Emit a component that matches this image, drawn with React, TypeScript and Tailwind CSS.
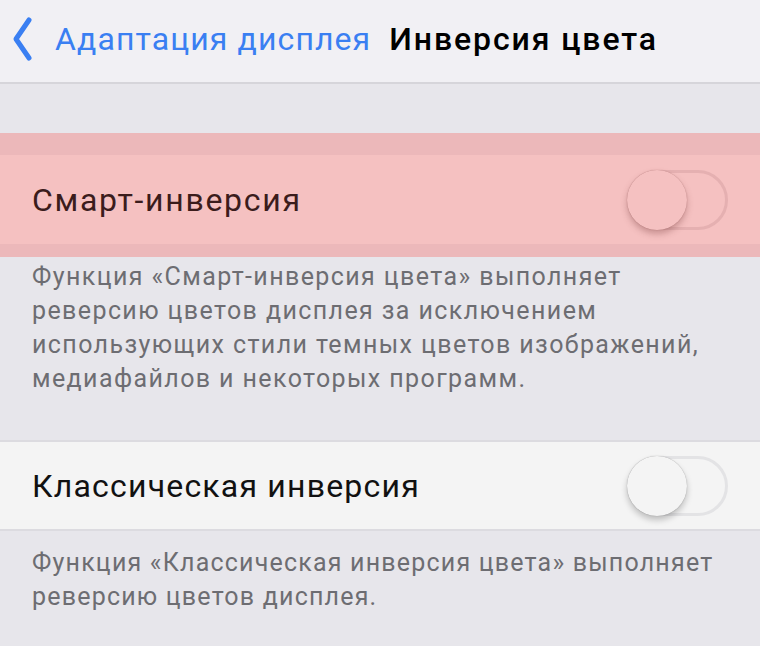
import React from "react";

function Toggle({ pink }: { pink?: boolean }) {
  return (
    <div
      className={`relative h-[60px] w-[101px] rounded-full border-[3px] ${
        pink ? "border-[#e5b0b1] bg-[#f5c1c1]" : "border-[#e3e3e5] bg-[#f4f4f4]"
      }`}
    >
      <div
        className={`absolute left-[-3px] top-[-3px] h-[60px] w-[60px] rounded-full ${
          pink
            ? "bg-[#f5c1c1] shadow-[0_4px_6px_rgba(120,60,60,0.35),0_0_1px_rgba(120,60,60,0.5)]"
            : "bg-[#f4f4f4] shadow-[0_4px_6px_rgba(0,0,0,0.22),0_0_1px_rgba(0,0,0,0.35)]"
        }`}
      />
    </div>
  );
}

export default function App() {
  return (
    <div
      className="h-[646px] w-[760px] overflow-hidden bg-[#e7e6eb]"
      style={{ fontFamily: "Roboto, 'Liberation Sans', sans-serif" }}
    >
      {/* nav bar */}
      <div className="flex h-[84px] items-center border-b-2 border-[#d6d5da] bg-[#f1f0f4] pb-1">
        <svg width="24" height="46" viewBox="0 0 24 46" className="ml-[11px] mr-[20px]">
          <path d="M18 4 L5 23 L18 42" fill="none" stroke="#3a7ff2" strokeWidth="5" strokeLinecap="round" strokeLinejoin="round" />
        </svg>
        <span className="text-[32px] tracking-[1.1px] text-[#3a7ff2]">Адаптация дисплея</span>
        <span className="ml-[18px] text-[32px] font-medium tracking-[1.9px] text-black">Инверсия цвета</span>
      </div>

      <div className="h-[49px]" />

      {/* smart inversion (highlighted) */}
      <div className="bg-[#ecb8ba] pb-[13px] pt-[22px]">
        <div className="flex h-[89px] items-center justify-between bg-[#f5c1c1] pl-[32px] pr-[32px]">
          <span className="text-[32px] tracking-[1.7px] text-[#3b1c1c]">Смарт-инверсия</span>
          <Toggle pink />
        </div>
      </div>

      <p className="px-[32px] pt-[3px] text-[25px] leading-[34px] tracking-[1.4px] text-[#6d6d72]">
        Функция «Смарт-инверсия цвета» выполняет
        <br />
        реверсию цветов дисплея за исключением
        <br />
        использующих стили темных цветов изображений,
        <br />
        медиафайлов и некоторых программ.
      </p>

      <div className="h-[44px]" />

      {/* classic inversion */}
      <div className="flex h-[91px] items-center justify-between border-y-2 border-[#dcdbe0] bg-[#f4f4f4] pl-[32px] pr-[32px]">
        <span className="text-[32px] tracking-[1.2px] text-[#111]">Классическая инверсия</span>
        <Toggle />
      </div>

      <p className="px-[32px] pt-[15px] text-[25px] leading-[34px] tracking-[1.2px] text-[#6d6d72]">
        Функция «Классическая инверсия цвета» выполняет
        <br />
        реверсию цветов дисплея.
      </p>
    </div>
  );
}
